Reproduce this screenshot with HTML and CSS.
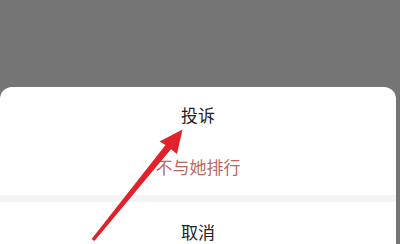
FILE: index.html
```html
<!DOCTYPE html>
<html lang="zh">
<head>
<meta charset="utf-8">
<link rel="stylesheet" href="styles.css">
</head>
<body>
<div class="screen">
  <div class="backdrop"></div>
  <div class="sheet">
    <div class="item item-first">投诉</div>
    <div class="item item-warn">不与她排行</div>
    <div class="band"></div>
    <div class="item item-cancel">取消</div>
  </div>
  <svg class="arrow" viewBox="0 0 400 244" width="400" height="244">
    <polygon fill="#e2222a" points="182.5,129.5 177,154 170.9,149.3 94.4,241.1 91.6,238.9 165.5,144.9 159.5,141.5"/>
  </svg>
</div>
</body>
</html>
```
FILE: styles.css
```css
html, body {
  margin: 0;
  padding: 0;
}
body {
  width: 400px;
  height: 244px;
  overflow: hidden;
  background: #757575;
  font-family: "Noto Sans CJK SC", "Noto Sans", sans-serif;
}
.screen {
  position: relative;
  width: 400px;
  height: 244px;
  overflow: hidden;
}
.backdrop {
  height: 87px;
  background: #757575;
}
.sheet {
  width: 396px;
  background: #ffffff;
  border-radius: 12px 12px 0 0;
  display: flex;
  flex-direction: column;
}
.item {
  display: flex;
  align-items: center;
  justify-content: center;
  font-size: 17px;
  color: #222222;
  box-sizing: border-box;
}
.item-first {
  height: 54px;
}
.item-warn {
  height: 54px;
  padding-bottom: 4px;
  color: #b86966;
}
.band {
  height: 7px;
  background: #f4f4f4;
}
.item-cancel {
  height: 42px;
  padding-top: 16px;
}
.arrow {
  position: absolute;
  left: 0;
  top: 0;
}
```
